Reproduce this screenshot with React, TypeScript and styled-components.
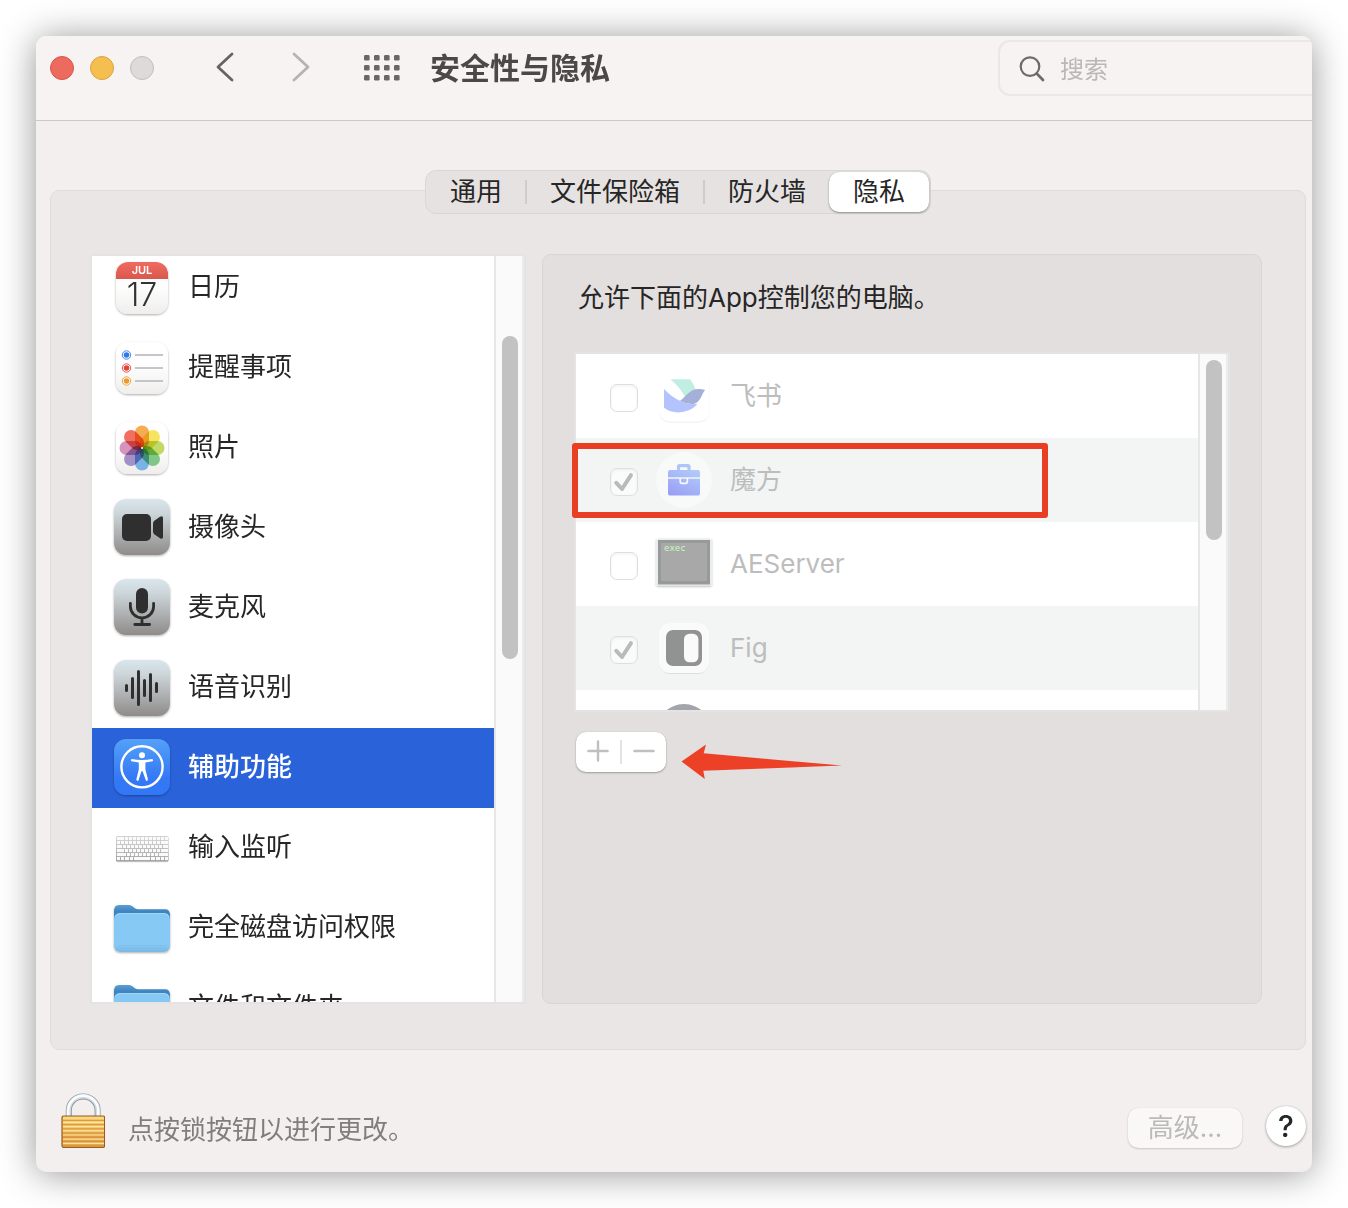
import React, { ReactNode } from "react";
import styled, { createGlobalStyle, css } from "styled-components";

const GlobalStyle = createGlobalStyle`
  *, *::before, *::after { box-sizing: border-box; }
  body {
    margin: 0;
    background: #ffffff;
    color: #262626;
    font-family: Inter, "Noto Sans CJK SC", sans-serif;
    font-size: 26px;
    line-height: 36px;
  }
  button, input { font: inherit; color: inherit; }
  ul { list-style: none; margin: 0; padding: 0; }
`;

/* ---------- window ---------- */

const Window = styled.div`
  margin: 36px;
  border-radius: 10px;
  overflow: hidden;
  background: #f3efee;
  box-shadow: 0 2px 36px rgba(0, 0, 0, 0.42);
`;

const TitleBar = styled.header`
  display: flex;
  align-items: center;
  height: 85px;
  padding: 0 0 20px 14px;
  background: #f7f3f2;
  border-bottom: 1px solid #cbc8c7;
`;

const TrafficLights = styled.div`
  display: flex;
  gap: 16px;
`;

const Light = styled.button<{ $fill: string; $ring: string }>`
  width: 24px;
  height: 24px;
  padding: 0;
  border-radius: 50%;
  border: 1px solid ${(p) => p.$ring};
  background: ${(p) => p.$fill};
`;

const NavButtons = styled.div`
  display: flex;
  gap: 36px;
  margin-left: 51px;
`;

const PlainButton = styled.button`
  display: flex;
  align-items: center;
  justify-content: center;
  min-width: 40px;
  height: 40px;
  padding: 0;
  border: 0;
  background: none;
`;

const ShowAll = styled(PlainButton)`
  margin-left: 41px;
`;

const Title = styled.h1`
  flex: 1;
  margin: 0 0 0 28px;
  font-size: 30px;
  line-height: 40px;
  font-weight: 700;
  color: #4b4948;
`;

const SearchBox = styled.label`
  display: flex;
  align-items: center;
  gap: 14px;
  width: 314px;
  height: 56px;
  padding: 2px 0 0 18px;
  border: 2px solid #ebe7e6;
  border-right: 0;
  border-radius: 12px 0 0 12px;
`;

const SearchInput = styled.input`
  flex: 1;
  min-width: 0;
  padding: 2px 0 0;
  border: 0;
  outline: 0;
  background: none;
  font-size: 24px;
  &::placeholder { color: #bab7b6; opacity: 1; }
`;

/* ---------- tabs and panels ---------- */

const Body = styled.main`
  display: flex;
  flex-direction: column;
  padding: 49px 6px 0 14px;
`;

const Tabs = styled.div`
  z-index: 1;
  align-self: center;
  display: flex;
  align-items: center;
  height: 44px;
  padding: 1px;
  border: 1px solid #dad6d5;
  border-radius: 11px;
  background: #e6e2e1;
`;

const Tab = styled.button<{ $selected?: boolean }>`
  height: 40px;
  padding: 0 23px;
  border: 0;
  border-radius: 10px;
  background: none;
  line-height: 36px;
  white-space: nowrap;
  ${(p) =>
    p.$selected &&
    css`
      padding: 0 24px;
      background: #ffffff;
      box-shadow: 0 1px 2px rgba(0, 0, 0, 0.35), 0 0 1px rgba(0, 0, 0, 0.2);
    `}
`;

const TabDivider = styled.span`
  width: 2px;
  height: 24px;
  background: #d0cccb;
`;

const Panel = styled.section`
  display: flex;
  gap: 16px;
  margin-top: -24px;
  padding: 63px 43px 45px 39px;
  border: 1px solid #dfdbda;
  border-radius: 9px;
  background: #eae6e5;
`;

const ScrollFrame = styled.div<{ $height: number }>`
  display: flex;
  height: ${(p) => p.$height}px;
  border: 2px solid #e5e4e4;
  background: #ffffff;
  overflow: hidden;
`;

const ScrollTrack = styled.div<{ $start: number }>`
  flex: none;
  width: 30px;
  padding: ${(p) => p.$start}px 4px 0 6px;
  border-left: 2px solid #e7e7e7;
  border-right: 2px solid #ebebeb;
  background: #fafafa;
`;

const ScrollThumb = styled.div<{ $length: number }>`
  height: ${(p) => p.$length}px;
  border-radius: 8px;
  background: #c2c2c2;
`;

const Categories = styled.nav`
  flex: 0 0 436px;
`;

const CategoryList = styled.ul`
  flex: 1;
  margin-top: -8px;
`;

const Category = styled.button<{ $selected?: boolean }>`
  display: flex;
  align-items: center;
  gap: 18px;
  width: 100%;
  height: 80px;
  padding: 0 22px;
  border: 0;
  text-align: left;
  background: ${(p) => (p.$selected ? "#2962d9" : "none")};
  color: ${(p) => (p.$selected ? "#ffffff" : "#262626")};
  font-weight: ${(p) => (p.$selected ? 500 : 400)};
`;

const RowLabel = styled.span<{ $raise?: number }>`
  padding-bottom: ${(p) => p.$raise ?? 0}px;
  white-space: nowrap;
`;

const Detail = styled.section`
  flex: 1;
  min-width: 0;
  padding: 25px 31px 0;
  border: 1px solid #d9d5d4;
  border-radius: 9px;
  background: #e3dfde;
`;

const Hint = styled.p`
  margin: 0 4px 36px;
`;

const AppArea = styled.div`
  position: relative;
`;

const AppList = styled.ul`
  flex: 1;
`;

const AppRow = styled.li`
  height: 84px;
  color: #bdbdbd;
  &:nth-child(even) { background: #f3f5f4; }
`;

const AppLabel = styled.label`
  display: flex;
  align-items: center;
  gap: 18px;
  height: 100%;
  padding-left: 34px;
`;

const Tick = styled.span`
  display: grid;
  width: 28px;
  height: 28px;
  margin-top: 4px;
  > * { grid-area: 1 / 1; }
`;

const TickInput = styled.input`
  appearance: none;
  width: 28px;
  height: 28px;
  margin: 0;
  border: 1px solid #dedede;
  border-radius: 7px;
  background: rgba(255, 255, 255, 0.6);
  box-shadow: inset 0 1px 3px rgba(0, 0, 0, 0.06);
`;

const Highlight = styled.div`
  position: absolute;
  left: -2px;
  top: 91px;
  width: 476px;
  height: 75px;
  border: 6px solid #e83f24;
  border-radius: 3px;
  pointer-events: none;
`;

const Actions = styled.div`
  display: flex;
  align-items: flex-start;
  gap: 15px;
  margin: 20px 0 0 2px;
`;

const AddRemove = styled.div`
  display: flex;
  align-items: center;
  width: 90px;
  height: 40px;
  border-radius: 10px;
  background: #ffffff;
  box-shadow: 0 1px 2px rgba(0, 0, 0, 0.3), 0 0 1px rgba(0, 0, 0, 0.15);
`;

const StepButton = styled(PlainButton)`
  flex: 1;
  padding-bottom: 2px;
`;

const StepDivider = styled.span`
  width: 2px;
  height: 24px;
  background: #e4e4e4;
`;

const Arrow = styled.svg`
  margin-top: 11px;
`;

/* ---------- footer ---------- */

const Footer = styled.footer`
  display: flex;
  align-items: flex-end;
  padding: 42px 6px 24px 25px;
`;

const LockText = styled.span`
  flex: 1;
  margin-left: 23px;
  color: #807e7d;
`;

const Advanced = styled.button`
  width: 114px;
  height: 40px;
  margin-right: 24px;
  padding: 0;
  border: 0;
  border-radius: 10px;
  background: #f9f8f6;
  color: #bcbab9;
  box-shadow: 0 1px 2px rgba(0, 0, 0, 0.16), 0 0 1px rgba(0, 0, 0, 0.14);
`;

const Help = styled.button`
  width: 40px;
  height: 40px;
  margin-bottom: 2px;
  padding: 0;
  border: 0;
  border-radius: 50%;
  background: #ffffff;
  font-size: 30px;
  font-weight: 500;
  box-shadow: 0 1px 3px rgba(0, 0, 0, 0.32), 0 0 1px rgba(0, 0, 0, 0.2);
`;

/* ---------- icons ---------- */

const IconSvg = styled.svg`
  flex: none;
  width: 56px;
  height: 56px;
  overflow: visible;
`;

const Icon = ({ children, top = 0 }: { children: ReactNode; top?: number }) => (
  <IconSvg viewBox={`0 ${top} 56 56`} aria-hidden="true">
    {children}
  </IconSvg>
);

const DefsSvg = styled.svg`
  position: absolute;
`;

const SharedDefs = () => (
  <DefsSvg width="0" height="0" aria-hidden="true">
    <defs>
      <linearGradient id="steel" x1="0" y1="0" x2="0" y2="1">
        <stop offset="0" stopColor="#d9e6ed" />
        <stop offset="0.25" stopColor="#cdd6da" />
        <stop offset="1" stopColor="#8f8b89" />
      </linearGradient>
      <linearGradient id="paper" x1="0" y1="0" x2="0" y2="1">
        <stop offset="0" stopColor="#ffffff" />
        <stop offset="0.5" stopColor="#fdfdfd" />
        <stop offset="1" stopColor="#efeeec" />
      </linearGradient>
      <linearGradient id="calRed" x1="0" y1="0" x2="0" y2="1">
        <stop offset="0" stopColor="#ee6c60" />
        <stop offset="1" stopColor="#d9574c" />
      </linearGradient>
      <linearGradient id="access" x1="0" y1="0" x2="0" y2="1">
        <stop offset="0" stopColor="#54a1f8" />
        <stop offset="0.7" stopColor="#3478f6" />
        <stop offset="1" stopColor="#3377f5" />
      </linearGradient>
      <linearGradient id="folderBack" x1="0" y1="0" x2="0" y2="1">
        <stop offset="0" stopColor="#5a9fd2" />
        <stop offset="0.25" stopColor="#3f84bf" />
      </linearGradient>
      <linearGradient id="folderFront" x1="0" y1="0" x2="0" y2="1">
        <stop offset="0" stopColor="#86c8f4" />
        <stop offset="0.8" stopColor="#87c9f5" />
        <stop offset="1" stopColor="#7ab8e6" />
      </linearGradient>
      <linearGradient id="caseFill" x1="0.2" y1="1" x2="0.8" y2="0">
        <stop offset="0" stopColor="#9a9ff6" />
        <stop offset="1" stopColor="#b0caf8" />
      </linearGradient>
      <linearGradient id="keys" x1="0" y1="0" x2="0" y2="1">
        <stop offset="0" stopColor="#d2d2d2" />
        <stop offset="1" stopColor="#929292" />
      </linearGradient>
      <filter id="drop" x="-20%" y="-20%" width="140%" height="150%">
        <feDropShadow dx="0" dy="1" stdDeviation="0.9" floodColor="#000" floodOpacity="0.32" />
      </filter>
      <filter id="faint" x="-20%" y="-20%" width="140%" height="150%">
        <feDropShadow dx="0" dy="0.6" stdDeviation="0.6" floodColor="#000" floodOpacity="0.14" />
      </filter>
    </defs>
  </DefsSvg>
);

const Paper = () => <rect x="2" y="2" width="52" height="52" rx="12" fill="url(#paper)" filter="url(#drop)" />;
const Steel = () => <rect width="56" height="56" rx="12" fill="url(#steel)" filter="url(#drop)" />;

const CalendarIcon = () => (
  <Icon>
    <Paper />
    <path d="M2 19V14A12 12 0 0 1 14 2H42A12 12 0 0 1 54 14V19Z" fill="url(#calRed)" />
    <text x="28" y="14" textAnchor="middle" fontSize="11" fontWeight="600" fill="#ffffff">JUL</text>
    <text x="28" y="46" textAnchor="middle" fontSize="32" fontWeight="300" fill="#333333">17</text>
  </Icon>
);

const RemindersIcon = () => (
  <Icon>
    <Paper />
    {[["#2f78e8", 15], ["#e0453a", 28], ["#eb9a2c", 41]].map(([color, y]) => (
      <g key={color}>
        <circle cx="12.5" cy={y} r="4.2" fill="#ffffff" stroke={color as string} strokeWidth="0.9" />
        <circle cx="12.5" cy={y} r="2.8" fill={color as string} />
        <path d={`M21 ${y}H49`} stroke="#bec0c5" strokeWidth="1.8" />
      </g>
    ))}
  </Icon>
);

const petals = ["#f4a23a", "#f4e04a", "#b6d551", "#6fbf78", "#6aa9e2", "#9583c0", "#cf85b3", "#ee5b48"];

const PetalGroup = styled.g`
  isolation: isolate;
  rect { mix-blend-mode: multiply; }
`;

const PhotosIcon = () => (
  <Icon>
    <Paper />
    <PetalGroup>
      {petals.map((color, i) => (
        <rect
          key={color}
          x="21"
          y="5.5"
          width="14"
          height="22.5"
          rx="7"
          fill={color}
          fillOpacity="0.88"
          transform={`rotate(${i * 45} 28 28)`}
        />
      ))}
    </PetalGroup>
    <circle cx="28" cy="28" r="1" fill="#ffffff" />
  </Icon>
);

const CameraIcon = () => (
  <Icon top={1}>
    <Steel />
    <rect x="8" y="15" width="29" height="27" rx="5" fill="#2f2f2f" />
    <path d="M39 24.5Q39 22.7 40.3 21.7L46 17.7Q49 16.2 49 19V38Q49 40.8 46 39.3L40.3 35.3Q39 34.3 39 32.5Z" fill="#2f2f2f" />
  </Icon>
);

const MicIcon = () => (
  <Icon top={1}>
    <Steel />
    <rect x="22" y="9" width="12" height="25.5" rx="6" fill="#2f2f2f" />
    <path d="M16.4 24.3V27.5A11.6 11.4 0 0 0 39.6 27.5V24.3M28 39V45M20.8 45.5H35.6" fill="none" stroke="#2f2f2f" strokeWidth="2.8" strokeLinecap="round" />
  </Icon>
);

const SpeechIcon = () => (
  <Icon>
    <Steel />
    <path
      d="M12.5 25.5V30.5M18.5 18.5V37.5M24.5 11.5V44.5M30.5 20.5V35.5M36.5 14.5V40.5M42.5 23.5V31.5"
      stroke="#2f2f2f"
      strokeWidth="3"
      strokeLinecap="round"
    />
  </Icon>
);

const AccessibilityIcon = () => (
  <Icon top={1}>
    <rect width="56" height="56" rx="12" fill="url(#access)" filter="url(#drop)" />
    <circle cx="28" cy="27.8" r="20.6" fill="none" stroke="#ffffff" strokeWidth="2.4" />
    <circle cx="28" cy="16.2" r="3" fill="#ffffff" />
    <path
      d="M17.6 20Q28 22 38.4 20Q39.6 21.4 38.6 22.2L31.4 23.4V30.4L34 40.6Q33.5 42.2 32 41.8L28.6 32.2H27.4L24.4 41.8Q22.7 42.2 22.3 40.6L24.8 30.4V23.4L17.4 22.2Q16.4 21.2 17.6 20Z"
      fill="#ffffff"
    />
  </Icon>
);

/* key widths per keyboard row, each row adds up to 52 */
const keyRows: number[][] = [
  [8, 4, 4, 4, 4, 4, 4, 4, 4, 4, 4, 4],
  [4, 4, 4, 4, 4, 4, 4, 4, 4, 4, 4, 8],
  [6, 4, 4, 4, 4, 4, 4, 4, 4, 4, 4, 6],
  [8, 4, 4, 4, 4, 4, 4, 4, 4, 4, 8],
  [10, 4, 4, 4, 4, 4, 4, 4, 4, 10],
  [4, 4, 5, 4, 17, 5, 5, 4, 4],
];

const KeyboardIcon = () => (
  <Icon>
    <rect x="2" y="16" width="52.5" height="25.5" rx="1.5" fill="url(#keys)" filter="url(#faint)" />
    {keyRows.map((row, r) => {
      let x = 2;
      return row.map((w, k) => {
        const left = x;
        x += w;
        return <rect key={`${r}-${k}`} x={left + 0.8} y={17 + r * 4} width={w - 0.8} height="3.2" fill="#fafafa" />;
      });
    })}
  </Icon>
);

const FolderIcon = () => (
  <Icon>
    <g filter="url(#drop)">
      <path d="M0 11Q0 5 5 5H15C19 5 19.5 9.2 24 9.2H51Q56 9.2 56 15V30H0Z" fill="url(#folderBack)" />
      <rect y="13" width="56" height="39" rx="6" fill="url(#folderFront)" />
    </g>
    <path d="M1 17Q2 13.5 6 13.5H50Q54 13.5 55 17" fill="none" stroke="#a5dafa" strokeWidth="0.8" />
    <path d="M4 45.5H52M4 48H52" stroke="#7dbdea" strokeWidth="0.7" />
  </Icon>
);

const FeishuIcon = () => (
  <Icon>
    <rect x="3" y="3" width="50.5" height="50.5" rx="11" fill="#ffffff" filter="url(#faint)" />
    <path d="M14.3 11.3H33.2Q34.2 11.3 34.8 12.2Q38.5 17 39.7 22L29 28.8Q23 18 14.3 11.3Z" fill="#c1eee3" />
    <path d="M8 21Q16 29.5 24 32.7Q30 36 36 36H41.5Q34 44.4 22 44.4Q14 44.4 8 39.8Z" fill="#b3c3fd" />
    <path d="M24 32.7C30 29 33 21 43 21Q46.5 21 49.2 22C45.5 25 45 36 36 36Q30 36 24 32.7Z" fill="#a4b0d7" />
  </Icon>
);

const BriefcaseIcon = () => (
  <Icon>
    <circle cx="28" cy="28" r="28" fill="#f8faf9" />
    <path d="M22.5 19V14.6Q22.5 13.6 23.5 13.6H32Q33 13.6 33 14.6V19" fill="none" stroke="#aec5f8" strokeWidth="3.2" />
    <rect x="12" y="18" width="32" height="25.6" rx="2.2" fill="url(#caseFill)" />
    <path d="M12 26H44" stroke="#f8faf9" strokeWidth="1.4" />
    <path d="M24.2 26V29.5Q24.2 31.4 26 31.4H29.6Q31.4 31.4 31.4 29.5V26" fill="none" stroke="#f8faf9" strokeWidth="1.6" />
  </Icon>
);

const ExecIcon = () => (
  <Icon>
    <rect x="0.5" y="2.5" width="55" height="47" rx="1" fill="#e8eff2" filter="url(#drop)" />
    <rect x="2" y="4" width="52" height="44.5" fill="#999999" />
    <rect x="5" y="7" width="46" height="38" fill="#a8a8a8" />
    <text x="8" y="15" fontSize="9" fontFamily='"DejaVu Sans Mono", monospace' fill="#c6fbc4">exec</text>
  </Icon>
);

const FigIcon = () => (
  <Icon>
    <rect x="3" y="3" width="50" height="50" rx="11" fill="#f9faf9" filter="url(#faint)" />
    <rect x="10" y="10" width="36" height="36" rx="7" fill="#919392" />
    <rect x="28" y="13.7" width="14.4" height="28.6" rx="5.5" fill="#f9faf9" />
  </Icon>
);

const RoundIcon = () => (
  <Icon>
    <circle cx="28" cy="28" r="28" fill="#a3a5ac" />
  </Icon>
);

const Padlock = () => (
  <svg width="44" height="56" viewBox="0 0 44 56" aria-hidden="true">
    <defs>
      <linearGradient id="brass" x1="0" y1="0" x2="0" y2="1">
        <stop offset="0" stopColor="#f6cf72" />
        <stop offset="0.45" stopColor="#f2bd5c" />
        <stop offset="0.7" stopColor="#e39c45" />
        <stop offset="1" stopColor="#eeb455" />
      </linearGradient>
    </defs>
    <path d="M7.8 26V18.4A14.4 14 0 0 1 36.6 18.4V26" fill="none" stroke="#8b959d" strokeWidth="6" />
    <path d="M7.6 26V18.4A14.6 14.2 0 0 1 36.8 18.4V26" fill="none" stroke="#d3dce2" strokeWidth="4.6" />
    <path d="M7.2 26V18.4A15 14.6 0 0 1 37.2 18.4V26" fill="none" stroke="#fafcfd" strokeWidth="2.4" />
    <rect x="1" y="24" width="42.6" height="31.4" rx="1.6" fill="url(#brass)" stroke="#9c5a1e" strokeWidth="1.2" />
    <path d="M2 26H43M2 30.4H43M2 34.6H43M2 38.8H43M2 43H43M2 47.2H43M2 51.4H43" stroke="#fbe59b" strokeWidth="1.2" />
    <path d="M2 28.4H43M2 32.6H43M2 36.8H43M2 41H43M2 45.2H43M2 49.4H43M2 53.4H43" stroke="#d08f3c" strokeWidth="0.9" />
  </svg>
);

/* ---------- content ---------- */

const tabs = ["通用", "文件保险箱", "防火墙", "隐私"];

const categories = [
  { name: "日历", icon: <CalendarIcon /> },
  { name: "提醒事项", icon: <RemindersIcon /> },
  { name: "照片", icon: <PhotosIcon /> },
  { name: "摄像头", icon: <CameraIcon /> },
  { name: "麦克风", icon: <MicIcon /> },
  { name: "语音识别", icon: <SpeechIcon /> },
  { name: "辅助功能", icon: <AccessibilityIcon />, selected: true },
  { name: "输入监听", icon: <KeyboardIcon /> },
  { name: "完全磁盘访问权限", icon: <FolderIcon /> },
  { name: "文件和文件夹", icon: <FolderIcon /> },
];

const apps = [
  { name: "飞书", icon: <FeishuIcon />, on: false },
  { name: "魔方", icon: <BriefcaseIcon />, on: true },
  { name: "AEServer", icon: <ExecIcon />, on: false },
  { name: "Fig", icon: <FigIcon />, on: true },
  { name: "", icon: <RoundIcon />, on: false },
];

const dotColumns = [0, 10, 20, 30];
const dotRows = [0, 10, 20];

export default function App() {
  return (
    <>
      <GlobalStyle />
      <SharedDefs />
      <Window>
        <TitleBar>
          <TrafficLights>
            <Light $fill="#ec6a5e" $ring="#d8544a" aria-label="关闭" />
            <Light $fill="#f5bf4f" $ring="#dba341" aria-label="最小化" />
            <Light $fill="#dddad9" $ring="#c2bebd" aria-label="缩放" />
          </TrafficLights>
          <NavButtons>
            <PlainButton aria-label="后退">
              <svg width="20" height="32" viewBox="0 0 20 32" fill="none" stroke="#676463" strokeWidth="2.8" strokeLinecap="round" strokeLinejoin="round">
                <path d="M17 2L3 15L17 28" />
              </svg>
            </PlainButton>
            <PlainButton aria-label="前进">
              <svg width="20" height="32" viewBox="0 0 20 32" fill="none" stroke="#b6b3b2" strokeWidth="2.8" strokeLinecap="round" strokeLinejoin="round">
                <path d="M3 2L17 15L3 28" />
              </svg>
            </PlainButton>
          </NavButtons>
          <ShowAll aria-label="显示全部">
            <svg width="36" height="26" viewBox="0 0 36 26" fill="#6a6766">
              {dotRows.map((y) => dotColumns.map((x) => <rect key={`${x}-${y}`} x={x} y={y} width="5.6" height="5.6" rx="1.4" />))}
            </svg>
          </ShowAll>
          <Title>安全性与隐私</Title>
          <SearchBox>
            <svg width="28" height="28" viewBox="0 0 28 28" fill="none" stroke="#6d6a69" strokeWidth="2.2" strokeLinecap="round" aria-hidden="true">
              <circle cx="12" cy="11.6" r="9.3" />
              <path d="M18.8 18.6L25 25" strokeWidth="2.8" />
            </svg>
            <SearchInput type="text" placeholder="搜索" aria-label="搜索" />
          </SearchBox>
        </TitleBar>

        <Body>
          <Tabs role="tablist">
            {tabs.map((name, i) => {
              const selected = i === tabs.length - 1;
              return (
                <React.Fragment key={name}>
                  {i > 0 && !selected && <TabDivider />}
                  <Tab role="tab" aria-selected={selected} $selected={selected}>{name}</Tab>
                </React.Fragment>
              );
            })}
          </Tabs>

          <Panel>
            <Categories>
              <ScrollFrame $height={750}>
                <CategoryList>
                  {categories.map((c) => (
                    <li key={c.name}>
                      <Category $selected={c.selected}>
                        {c.icon}
                        <RowLabel $raise={2}>{c.name}</RowLabel>
                      </Category>
                    </li>
                  ))}
                </CategoryList>
                <ScrollTrack $start={80}>
                  <ScrollThumb $length={323} />
                </ScrollTrack>
              </ScrollFrame>
            </Categories>

            <Detail>
              <Hint>允许下面的App控制您的电脑。</Hint>
              <AppArea>
                <ScrollFrame $height={360}>
                  <AppList>
                    {apps.map((a, i) => (
                      <AppRow key={i}>
                        <AppLabel>
                          <Tick>
                            <TickInput type="checkbox" checked={a.on} disabled readOnly />
                            {a.on && (
                              <svg width="28" height="28" viewBox="0 0 28 28" fill="none" stroke="#bababa" strokeWidth="4" strokeLinecap="round" strokeLinejoin="round" aria-hidden="true">
                                <path d="M6.3 14.8L12 21L21 7.2" />
                              </svg>
                            )}
                          </Tick>
                          {a.icon}
                          <RowLabel>{a.name}</RowLabel>
                        </AppLabel>
                      </AppRow>
                    ))}
                  </AppList>
                  <ScrollTrack $start={6}>
                    <ScrollThumb $length={180} />
                  </ScrollTrack>
                </ScrollFrame>
                <Highlight />
              </AppArea>
              <Actions>
                <AddRemove>
                  <StepButton aria-label="添加" disabled>
                    <svg width="22" height="22" viewBox="0 0 22 22" stroke="#bfbfbf" strokeWidth="2.4" strokeLinecap="round">
                      <path d="M11 1.4V20.6M1.4 11H20.6" />
                    </svg>
                  </StepButton>
                  <StepDivider />
                  <StepButton aria-label="移除" disabled>
                    <svg width="22" height="22" viewBox="0 0 22 22" stroke="#bfbfbf" strokeWidth="2.4" strokeLinecap="round">
                      <path d="M1.4 11H20.6" />
                    </svg>
                  </StepButton>
                </AddRemove>
                <Arrow width="162" height="37" viewBox="0 0 162 37" aria-hidden="true">
                  <path d="M0.5 18.5L25 1.5L22.7 10.2L161 22.6L22.3 27.8L23.8 36Z" fill="#ec4127" />
                </Arrow>
              </Actions>
            </Detail>
          </Panel>
        </Body>

        <Footer>
          <Padlock />
          <LockText>点按锁按钮以进行更改。</LockText>
          <Advanced disabled>高级…</Advanced>
          <Help aria-label="帮助">?</Help>
        </Footer>
      </Window>
    </>
  );
}
